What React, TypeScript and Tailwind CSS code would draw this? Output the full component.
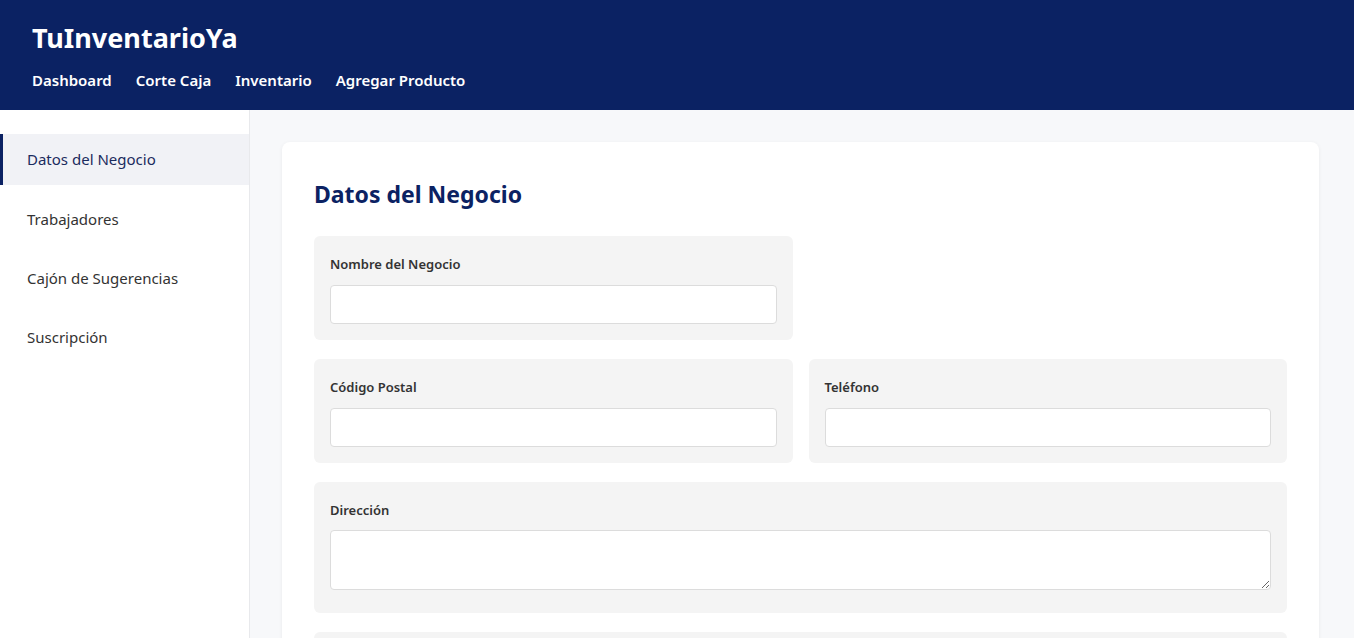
import { ReactNode } from 'react';

const navLinks = ['Dashboard', 'Corte Caja', 'Inventario', 'Agregar Producto'];
const sideItems = ['Datos del Negocio', 'Trabajadores', 'Cajón de Sugerencias', 'Suscripción'];

function Field({ label, children }: { label: string; children: ReactNode }) {
  return (
    <div className="bg-[#f4f4f4] rounded-md p-4">
      <label className="block text-[13px] leading-6 font-semibold text-[#333] mb-[9px]">{label}</label>
      {children}
    </div>
  );
}

export default function App() {
  return (
    <div className="h-[638px] overflow-hidden flex flex-col font-['Noto_Sans',sans-serif] bg-[#f7f8fa]">
      <header className="h-[110px] shrink-0 bg-[#0b2263] px-8 pt-[20px]">
        <h1 className="text-[27px] leading-9 font-bold text-white">TuInventarioYa</h1>
        <nav className="flex gap-6 mt-[12px]">
          {navLinks.map((link) => (
            <a key={link} className="text-[15px] leading-6 font-semibold text-white">
              {link}
            </a>
          ))}
        </nav>
      </header>

      <div className="flex flex-1 min-h-0">
        <aside className="w-[250px] shrink-0 bg-white border-r border-[#e8e9ec] pt-6 flex flex-col gap-2">
          {sideItems.map((item, index) => (
            <div
              key={item}
              className={
                index === 0
                  ? 'h-[51px] flex items-center pl-[24px] border-l-[3px] border-[#0b2263] bg-[#f1f2f6] text-[15px] text-[#1b2b5e]'
                  : 'h-[51px] flex items-center pl-[27px] pt-[2px] text-[15px] text-[#333]'
              }
            >
              {item}
            </div>
          ))}
        </aside>

        <main className="flex-1 pl-8 pr-[35px] pt-8">
          <div className="bg-white rounded-lg shadow-[0_1px_4px_rgba(0,0,0,0.06)] px-8 pt-[36px] pb-8">
            <h2 className="text-[23px] leading-8 font-bold text-[#0b2263] mb-[26px]">Datos del Negocio</h2>

            <div className="flex flex-col gap-[19px]">
              <div className="grid grid-cols-2 gap-4">
                <Field label="Nombre del Negocio">
                  <input className="w-full h-[39px] bg-white border border-[#dcdcdc] rounded px-3 text-sm" />
                </Field>
              </div>
              <div className="grid grid-cols-2 gap-4">
                <Field label="Código Postal">
                  <input className="w-full h-[39px] bg-white border border-[#dcdcdc] rounded px-3 text-sm" />
                </Field>
                <Field label="Teléfono">
                  <input className="w-full h-[39px] bg-white border border-[#dcdcdc] rounded px-3 text-sm" />
                </Field>
              </div>
              <Field label="Dirección">
                <textarea className="block w-full h-[60px] -mt-[1px] mb-[7px] bg-white border border-[#dcdcdc] rounded px-3 py-2 text-sm" />
              </Field>
              {/* next section, below the fold */}
              <div className="bg-[#f4f4f4] rounded-md h-[104px]" />
            </div>
          </div>
        </main>
      </div>
    </div>
  );
}
